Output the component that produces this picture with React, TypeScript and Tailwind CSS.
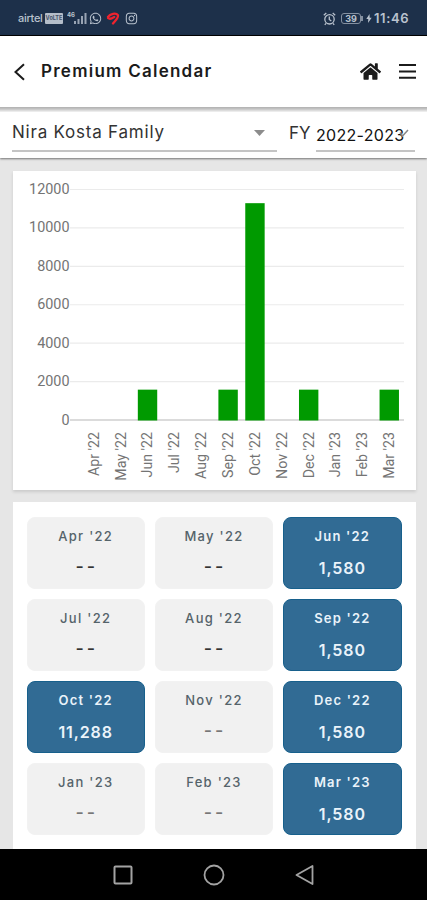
import { FaHome } from "react-icons/fa";
import { FaWhatsapp, FaInstagram } from "react-icons/fa6";
import clsx from "clsx";

interface Month {
  label: string;
  amount: number;
  faint?: boolean;
}

const months: Month[] = [
  { label: "Apr '22", amount: 0 },
  { label: "May '22", amount: 0 },
  { label: "Jun '22", amount: 1580 },
  { label: "Jul '22", amount: 0 },
  { label: "Aug '22", amount: 0 },
  { label: "Sep '22", amount: 1580 },
  { label: "Oct '22", amount: 11288 },
  { label: "Nov '22", amount: 0, faint: true },
  { label: "Dec '22", amount: 1580 },
  { label: "Jan '23", amount: 0, faint: true },
  { label: "Feb '23", amount: 0, faint: true },
  { label: "Mar '23", amount: 1580 },
];

const ticks = [12000, 10000, 8000, 6000, 4000, 2000, 0];

function StatusBar() {
  return (
    <div className="flex h-[35px] items-center justify-between bg-[#1d304a] pt-[2px] pr-[15px] pl-[18px] text-[#b9c2ce]">
      <div className="flex items-center">
        <span className="w-[27px] text-[11px] font-medium tracking-[-0.3px]">airtel</span>
        <span className="flex h-[11px] w-[18px] items-center justify-center rounded-[1px] bg-[#b4bdc9] text-[5.5px] font-bold text-[#445269]">
          VoLTE
        </span>
        <svg className="ml-[4px]" width="21" height="15" viewBox="0 0 21 15" fill="currentColor">
          <text x="0" y="6" fontSize="6" fontWeight="700">46</text>
          <path d="M7 10h2v3H7zM10.500 8h2v5h-2zM14 5h2v8h-2zM17.500 2h2v11h-2z" opacity=".8" />
        </svg>
        <FaWhatsapp className="ml-[1px]" size={13} />
        <svg className="ml-[4px]" width="14" height="14" viewBox="0 0 14 14" fill="none">
          <path
            d="M2 4.800C4 1.800 10 .6 11.800 3c1.300 2.300-1.600 4.800-4.800 8.500M2.200 6.200c2 1.600 4.500-.2 6-1.200"
            stroke="#f0232e"
            strokeWidth="2.300"
            strokeLinecap="round"
          />
        </svg>
        <FaInstagram className="ml-[5px]" size={13} />
      </div>
      <div className="flex items-center">
        <svg width="13" height="14" viewBox="0 0 13 14" fill="none" stroke="currentColor" strokeWidth="1.3">
          <circle cx="6.5" cy="7.3" r="4.7" />
          <path d="M.8 3.2 3.3 1M12.2 3.2 9.7 1M6.3 4.5v3l2 1.5M3 11.3l-1.2 1.5M10 11.3l1.2 1.5" />
        </svg>
        <span className="ml-[5px] flex h-[11px] w-[20px] items-center justify-center rounded-[3px] border border-[#8490a1] text-[9px] font-bold">
          39
        </span>
        <span className="h-[5px] w-[2px] bg-[#8490a1]" />
        <svg className="ml-[3px]" width="6" height="11" viewBox="0 0 6 11" fill="currentColor">
          <path d="M3.5 1 .3 6h2L2 10l3.7-5.3h-2z" />
        </svg>
        <span className="ml-[2px] w-[38px] text-[13px] font-semibold tracking-[0.6px] whitespace-nowrap">11:46</span>
      </div>
    </div>
  );
}

function Header() {
  return (
    <header className="flex h-[72px] items-center border-t border-black bg-white pr-[11px] pl-[14px] text-[#1b1b1b]">
      <svg width="12" height="18" viewBox="0 0 12 18" fill="none" stroke="currentColor" strokeWidth="2">
        <path d="M10 1.2 1.5 9l8.5 7.8" />
      </svg>
      <h1 className="ml-[15px] flex-1 text-[17px] font-semibold tracking-[1.250px] whitespace-nowrap">
        Premium Calendar
      </h1>
      <FaHome size={21} />
      <svg className="ml-[18px]" width="17" height="15" viewBox="0 0 17 15" fill="currentColor">
        <path d="M0 0h17v2H0zM0 6.5h17v2H0zM0 12.7h17v2H0z" />
      </svg>
    </header>
  );
}

function Filters() {
  return (
    <div className="mt-[5px] flex h-[46px] bg-white pr-[12px] pl-[12px] text-[#333]">
      <div className="flex h-[40px] w-[265px] items-start justify-between border-b-2 border-[#c4c4c4] pt-[8px] pr-[12px] text-[17px] leading-[24px] tracking-[0.780px]">
        <span>Nira Kosta Family</span>
        <svg className="mt-[10px]" width="11" height="6" viewBox="0 0 11 6" fill="#8c8c8c">
          <path d="M0 0h11L5.500 6z" />
        </svg>
      </div>
      <span className="ml-[12px] pt-[9px] text-[17px] leading-[24px]">FY</span>
      <div className="ml-auto flex h-[40px] w-[99px] items-start border-b-2 border-[#c4c4c4] pt-[12px]">
        <span className="w-[88px] text-[16px] leading-[22px] tracking-[0.3px] whitespace-nowrap text-[#111]">
          2022-2023
        </span>
        <svg className="-ml-[5px] mt-[5px]" width="10" height="9" viewBox="0 0 10 9" fill="none" stroke="#888" strokeWidth="1.5">
          <path d="M1 3.5 3.500 7 9 1" />
        </svg>
      </div>
    </div>
  );
}

function PremiumChart() {
  const y = (value: number) => 249 - (value / 12000) * 230.500;
  const x = (index: number) => 80.800 + index * 26.860;

  return (
    <div className="h-[319px] bg-white shadow-[0_2px_3px_rgba(0,0,0,0.12)]">
      <svg width="403" height="319" viewBox="0 0 403 319" fontFamily="Roboto, sans-serif" fill="#747474">
        {ticks.map((tick) => (
          <g key={tick}>
            <path
              d={`M57 ${y(tick)}H391`}
              stroke={tick === 0 ? "#cfcfcf" : "#ebebeb"}
              strokeWidth={tick === 0 ? 1.5 : 1.2}
            />
            <text x="56.500" y={y(tick) + 4.500} fontSize="14.400" textAnchor="end">
              {tick}
            </text>
          </g>
        ))}
        {months.map((month, index) => (
          <g key={month.label}>
            {month.amount > 0 && (
              <rect
                x={x(index) - 9.700}
                y={y(month.amount)}
                width="19.400"
                height={249.500 - y(month.amount)}
                fill="#009a00"
              />
            )}
            <text
              transform={`translate(${x(index) + 4.900} 261) rotate(-90)`}
              fontSize="14.200"
              textAnchor="end"
            >
              {month.label}
            </text>
          </g>
        ))}
      </svg>
    </div>
  );
}

function MonthTile({ month }: { month: Month }) {
  const active = month.amount > 0;
  return (
    <div
      className={clsx(
        "flex h-[72.500px] flex-col items-center rounded-[8px] pt-[8px]",
        active ? "border border-[#17608c] bg-[#316b94] text-[#eaf3fa]" : "border border-[#f2f2f2] bg-[#f1f1f1] text-[#55636a]"
      )}
    >
      <span
        className={clsx(
          "text-[13px] leading-[20px]",
          active ? "font-semibold tracking-[1.200px]" : "font-medium tracking-[1.300px]"
        )}
      >
        {month.label}
      </span>
      {active ? (
        <span className="mt-[11px] text-[16px] leading-[22px] font-semibold tracking-[0.900px]">
          {month.amount.toLocaleString("en-US")}
        </span>
      ) : (
        <span
          className={clsx(
            "mt-[10px] -mr-[2px] text-[18px] leading-[22px] font-medium tracking-[2.800px]",
            month.faint ? "text-[#777]" : "text-[#333]"
          )}
        >
          --
        </span>
      )}
    </div>
  );
}

function NavBar() {
  return (
    <nav className="flex h-[51px] items-center justify-between bg-black pr-[112px] pl-[113px]">
      <svg width="20" height="20" viewBox="0 0 20 20" fill="none" stroke="#a3a3a3" strokeWidth="2">
        <rect x="1.500" y="1.500" width="17" height="17" rx="1" />
      </svg>
      <svg width="22" height="22" viewBox="0 0 22 22" fill="none" stroke="#a3a3a3" strokeWidth="1.800">
        <circle cx="11" cy="11" r="9.500" />
      </svg>
      <svg width="20" height="20" viewBox="0 0 20 20" fill="none" stroke="#a3a3a3" strokeWidth="1.800" strokeLinejoin="round">
        <path d="M17.500 1v18L1.500 10z" />
      </svg>
    </nav>
  );
}

export default function App() {
  return (
    <div className="flex h-[900px] w-[427px] flex-col overflow-hidden bg-[#e6e6e6] font-['Inter',sans-serif]">
      <StatusBar />
      <div className="bg-[linear-gradient(to_bottom,#b0b0b0_72px,#c4c4c4_74px,#f4f4f4_77px)] shadow-[0_1px_2px_rgba(0,0,0,0.5)]">
        <Header />
        <Filters />
      </div>
      <main className="flex flex-1 flex-col gap-[12px] pt-[13px] pr-[11.500px] pl-[12.500px]">
        <PremiumChart />
        <div className="grid flex-1 grid-cols-3 content-start gap-x-[10px] gap-y-[9.600px] bg-white px-[14px] pt-[14.500px]">
          {months.map((month) => (
            <MonthTile key={month.label} month={month} />
          ))}
        </div>
      </main>
      <NavBar />
    </div>
  );
}
